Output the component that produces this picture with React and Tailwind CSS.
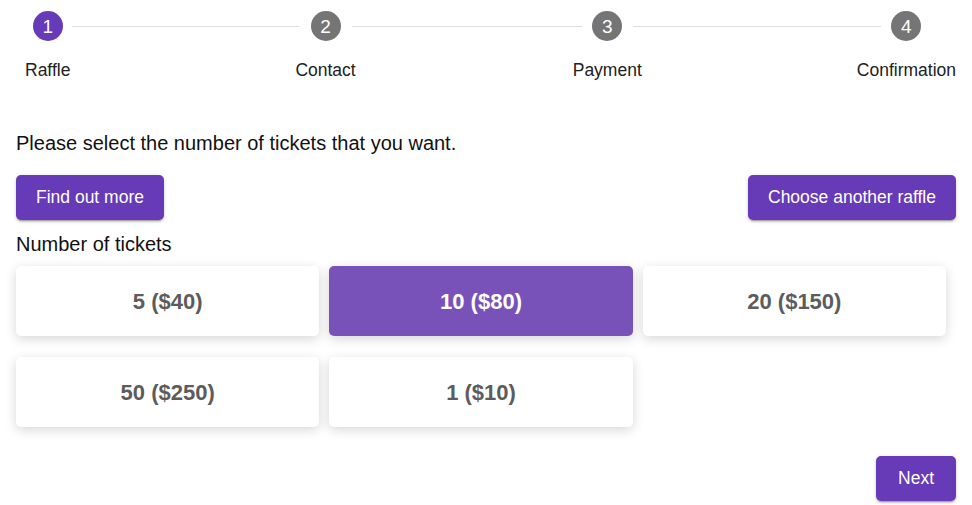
import React from "react";

const steps = ["Raffle", "Contact", "Payment", "Confirmation"];
const connectorClasses = [
  "flex-[226]",
  "flex-[218]",
  "flex-[216]",
];
const connectorMargins = [
  "ml-[2px] mr-[-4px]",
  "ml-[-4px] mr-[-9px]",
  "ml-[-9px] mr-[-24px]",
];

const tickets = [
  { label: "5 ($40)", selected: false },
  { label: "10 ($80)", selected: true },
  { label: "20 ($150)", selected: false },
  { label: "50 ($250)", selected: false },
  { label: "1 ($10)", selected: false },
];

function Step({ index, label, active }) {
  return (
    <div className="flex flex-col items-center">
      <div
        className={`flex h-[30px] w-[30px] items-center justify-center rounded-full text-[19px] leading-none text-white ${
          active ? "bg-[#673ab7]" : "bg-[#757575]"
        }`}
      >
        {index}
      </div>
      <div className="mt-[19px] whitespace-nowrap text-[17.5px] leading-[20px] text-[#212121]">
        {label}
      </div>
    </div>
  );
}

const btn =
  "flex h-[45px] items-center justify-center rounded-[5px] bg-[#673ab7] px-5 text-[17.5px] text-white shadow-[0_3px_1px_-2px_rgba(0,0,0,0.2),0_2px_2px_0_rgba(0,0,0,0.14),0_1px_5px_0_rgba(0,0,0,0.12)]";

export default function App() {
  return (
    <div
      className="min-h-[505px] w-[972px] bg-white px-4 text-[#111]"
      style={{ fontFamily: '"Liberation Sans", Arial, sans-serif' }}
    >
      {/* Stepper */}
      <div className="flex items-start pl-[9px] pt-[11px]">
        {steps.map((s, i) => (
          <React.Fragment key={s}>
            <Step index={i + 1} label={s} active={i === 0} />
            {i < steps.length - 1 && (
              <div className={`min-w-0 ${connectorClasses[i]}`}>
                <div
                  className={`mt-[15px] h-px bg-[#dedede] ${connectorMargins[i]}`}
                />
              </div>
            )}
          </React.Fragment>
        ))}
      </div>

      <p className="mt-[48px] text-[20px] leading-[30px]">
        Please select the number of tickets that you want.
      </p>

      <div className="mt-[17px] flex items-center justify-between">
        <button className={btn}>Find out more</button>
        <button className={btn}>Choose another raffle</button>
      </div>

      <div className="mt-[9px] text-[20px] leading-[30px]">Number of tickets</div>

      <div className="mt-[7px] grid grid-cols-3 gap-y-[21px]">
        {tickets.map((t) => (
          <div key={t.label} className="mr-[10px]">
            <div
              className={`flex h-[70px] items-center justify-center rounded-[5px] text-[22px] font-bold shadow-[0_3px_12px_rgba(0,0,0,0.16)] ${
                t.selected
                  ? "bg-[#7852b8] text-white"
                  : "bg-white text-[#5c5c5c]"
              }`}
            >
              {t.label}
            </div>
          </div>
        ))}
      </div>

      <div className="mt-[29px] flex justify-end">
        <button className={`${btn} h-[44px] px-[22px]`}>Next</button>
      </div>
    </div>
  );
}
